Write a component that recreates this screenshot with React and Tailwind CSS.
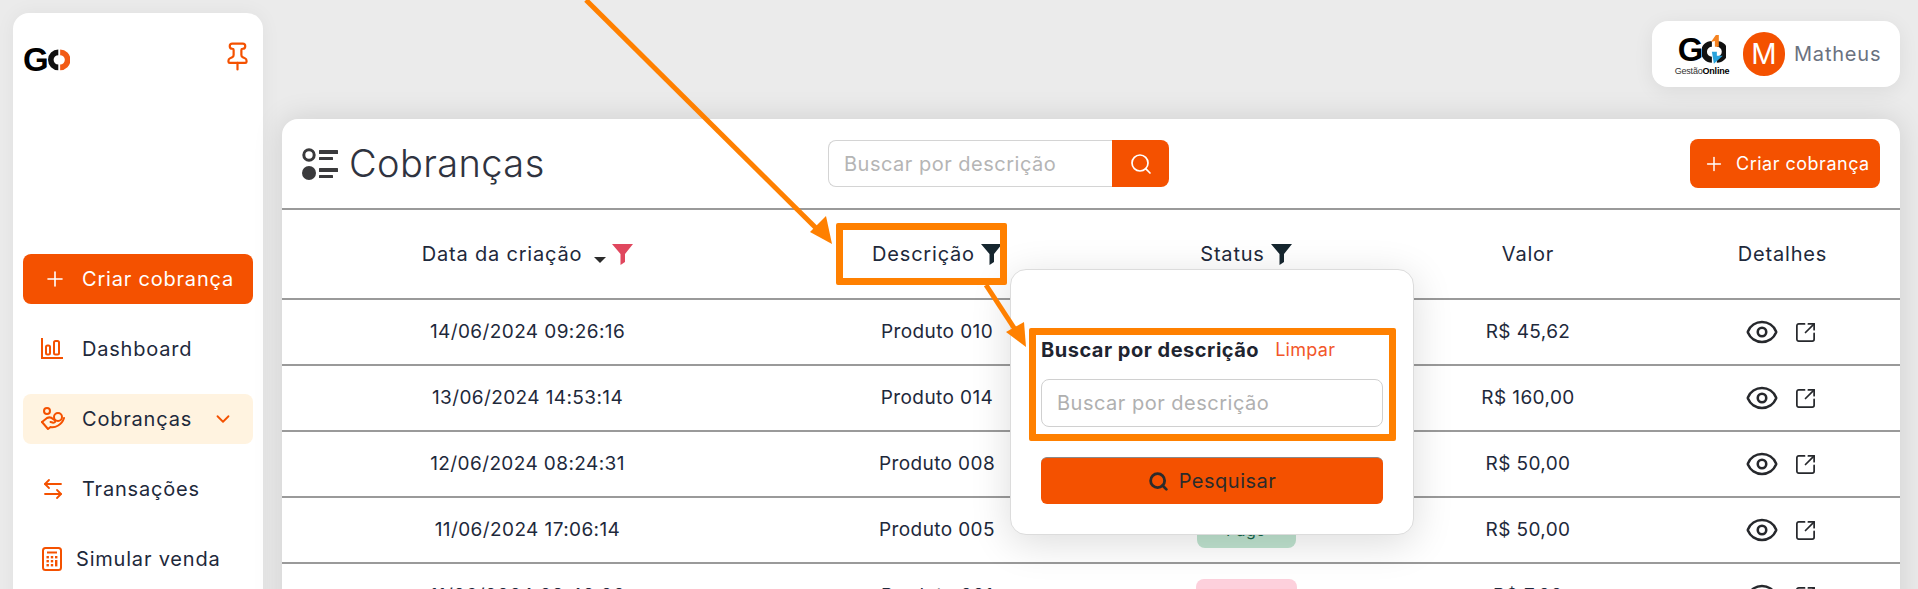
import React from "react";
import { Plus, Pin, ChevronDown, ArrowLeftRight, Search, Eye, SquareArrowOutUpRight } from "lucide-react";

const FONT = "font-['Inter','Liberation_Sans',sans-serif]";

function GoMark({ size = 30, full = false }) {
  return (
    <span className="inline-flex items-center leading-none font-['Liberation_Sans',sans-serif] font-bold text-black" style={{ fontSize: size }}>
      <span className="tracking-[-1px]">G</span>
      {full ? (
        <svg width={size * 0.72} height={size * 0.9} viewBox="0 0 24 30">
          <path d="M10 7A11 11 0 0 0 10 29L10 23A5 5 0 0 1 10 13Z" fill="#111" />
          <path d="M15 7A11 11 0 0 1 15 29L15 23A5 5 0 0 0 15 13Z" fill="#111" />
          <path d="M9 8L14 1H17V13H13V7Z" fill="#f58220" />
          <path d="M10 18H15V22H21L12 30L11 24Z" fill="#29a3dc" />
        </svg>
      ) : (
        <svg width={size * 0.68} height={size * 0.78} viewBox="0 0 24 24">
          <path d="M11 1A11 11 0 0 0 11 23L11 17A5 5 0 0 1 11 7Z" fill="#111" />
          <path d="M13 1A11 11 0 0 1 13 23L13 17A5 5 0 0 0 13 7Z" fill="#f25a14" />
        </svg>
      )}
    </span>
  );
}

function Filter({ color }) {
  return (
    <svg width="21" height="21" viewBox="0 0 21 21" className="shrink-0">
      <path d="M0 0H21L13 10V18L8.5 21V10Z" fill={color} />
    </svg>
  );
}

function BarsIcon() {
  return (
    <svg width="22" height="22" viewBox="0 0 22 22" fill="none" stroke="#f45100" strokeWidth="2">
      <path d="M1 0V20H22" />
      <rect x="5" y="7.5" width="4" height="9" rx="1.5" />
      <rect x="13" y="3" width="5" height="13.5" rx="1.5" />
    </svg>
  );
}

function HandIcon() {
  return (
    <svg width="24" height="24" viewBox="0 0 24 24" fill="none" stroke="#f45100" strokeWidth="2" strokeLinecap="round" strokeLinejoin="round">
      <circle cx="6" cy="4" r="3" />
      <circle cx="17" cy="10" r="4" />
      <path d="M1 15L6 11C8 10 10 10 12 12L14 13.5C15 15 13 16 11.5 15.5L9.5 15" />
      <path d="M1 15L7 22L9.5 20C14 21 21 18 23 11" />
    </svg>
  );
}

function CalcIcon() {
  return (
    <svg width="20" height="24" viewBox="0 0 20 24" fill="none" stroke="#f45100" strokeWidth="2">
      <rect x="1" y="1" width="18" height="22" rx="2.5" />
      <path d="M5 5.5H15" />
      <g fill="#f45100" stroke="none">
        <rect x="4.5" y="9" width="2.4" height="2.4" /><rect x="8.8" y="9" width="2.4" height="2.4" /><rect x="13" y="9" width="2.4" height="2.4" />
        <rect x="4.5" y="13" width="2.4" height="2.4" /><rect x="8.8" y="13" width="2.4" height="2.4" /><rect x="13" y="13" width="2.4" height="6.4" />
        <rect x="4.5" y="17" width="2.4" height="2.4" /><rect x="8.8" y="17" width="2.4" height="2.4" />
      </g>
    </svg>
  );
}

function ListIcon() {
  return (
    <svg width="36" height="32" viewBox="0 0 36 32" fill="#3a3a3c">
      <circle cx="7" cy="7" r="5.2" fill="none" stroke="#3a3a3c" strokeWidth="3" />
      <circle cx="7" cy="25" r="7" />
      <rect x="17" y="2" width="19" height="4" rx="0.5" />
      <rect x="17" y="9" width="14" height="3" rx="0.5" />
      <rect x="17" y="20" width="19" height="4" rx="0.5" />
      <rect x="17" y="27" width="14" height="3" rx="0.5" />
    </svg>
  );
}

function NavItem({ icon, label, active, chevron, gap = "w-[59px] pl-[18px]" }) {
  return (
    <div className={`flex h-[50px] items-center rounded-lg ${active ? "bg-[#fff3e0]" : ""}`}>
      <span className={`flex shrink-0 items-center ${gap}`}>{icon}</span>
      <span className="text-[20px] tracking-[0.8px] text-[#1e293b]">{label}</span>
      {chevron && <ChevronDown className="ml-auto mr-[19px] text-[#f45100]" size={22} strokeWidth={2} />}
    </div>
  );
}

const rows = [
  ["14/06/2024 09:26:16", "Produto 010", "R$ 45,62", null],
  ["13/06/2024 14:53:14", "Produto 014", "R$ 160,00", null],
  ["12/06/2024 08:24:31", "Produto 008", "R$ 50,00", null],
  ["11/06/2024 17:06:14", "Produto 005", "R$ 50,00", "pago"],
  ["11/06/2024 09:42:00", "Produto 001", "R$ 7,00", "pend"],
];

const COLS = "grid grid-cols-[491px_328px_290px_274px_235px]";

export default function App() {
  return (
    <div className={`relative flex h-[589px] w-[1918px] items-start overflow-hidden bg-[#ebebeb] ${FONT}`}>
      {/* Sidebar */}
      <aside className="ml-[13px] mt-[13px] flex h-[620px] w-[250px] shrink-0 flex-col rounded-2xl bg-white px-[10px] shadow-[0_0_20px_rgba(0,0,0,0.05)]">
        <div className="flex h-[47px] items-start justify-between pt-[30px]">
          <GoMark size={33} />
          <Pin size={31} strokeWidth={1.7} className="mt-[-2px] text-[#f45100]" />
        </div>
        <button className="mt-[194px] flex h-[50px] items-center rounded-lg bg-[#f45100] text-[20px] tracking-[0.8px] text-white">
          <Plus size={24} strokeWidth={1.6} className="ml-[20px] mr-[15px]" />
          Criar cobrança
        </button>
        <div className="mt-[20px] flex flex-col gap-[20px]">
          <NavItem icon={<BarsIcon />} label="Dashboard" />
          <NavItem icon={<HandIcon />} label="Cobranças" active chevron />
          <NavItem icon={<ArrowLeftRight size={24} strokeWidth={1.8} className="text-[#f45100]" />} label="Transações" />
          <NavItem icon={<CalcIcon />} label="Simular venda" gap="w-[53px] pl-[19px]" />
        </div>
      </aside>

      {/* Content */}
      <main className="ml-[19px] flex w-[1618px] shrink-0 flex-col">
        <div className="mt-[21px] flex justify-end">
          <div className="flex h-[66px] w-[248px] items-center rounded-2xl bg-white pl-[19px] shadow-[0_4px_20px_rgba(0,0,0,0.07)]">
            <div className="flex w-[62px] flex-col items-center gap-[1px] leading-none">
              <GoMark size={33} full />
              <span className="whitespace-nowrap font-['Liberation_Sans',sans-serif] text-[9px] leading-[9px] tracking-[-0.2px] text-[#333]">
                Gestão<b className="text-black">Online</b>
              </span>
            </div>
            <span className="ml-[10px] flex h-[44px] w-[42px] items-center justify-center rounded-full bg-[#f45100] text-[28px] text-white">M</span>
            <span className="ml-[9px] text-[20px] tracking-[0.8px] text-[#6b7280]">Matheus</span>
          </div>
        </div>

        <section className="mt-[32px] h-[500px] rounded-t-2xl bg-white shadow-[0_0_30px_rgba(0,0,0,0.12)]">
          <header className="flex h-[91px] items-center border-b-2 border-[#9a9a9a] pl-[20px] pr-[20px]">
            <ListIcon />
            <h1 className="ml-[11px] w-[479px] text-[38px] font-light tracking-[0.4px] text-[#2f3340]">Cobranças</h1>
            <div className="flex h-[47px] w-[341px] shrink-0">
              <div className="flex flex-1 items-center rounded-l-lg border border-r-0 border-[#d4d4d4] pl-[15px] text-[20px] tracking-[0.5px] text-[#b5b5b5]">
                Buscar por descrição
              </div>
              <div className="flex w-[57px] items-center justify-center rounded-r-lg bg-[#f45100] text-white">
                <Search size={24} strokeWidth={1.7} />
              </div>
            </div>
            <button className="ml-auto flex h-[49px] w-[190px] items-center rounded-lg bg-[#f45100] text-[18px] tracking-[0.5px] text-white">
              <Plus size={22} strokeWidth={1.6} className="ml-[13px] mr-[11px]" />
              Criar cobrança
            </button>
          </header>

          <div className={`${COLS} h-[90px] items-center border-b-2 border-[#9a9a9a] text-[20px] tracking-[0.8px] text-[#1e293b]`}>
            <div className="flex items-center justify-center">
              Data da criação
              <svg width="12" height="6" viewBox="0 0 12 6" className="ml-[12px] mr-[6px] mt-[11px]"><path d="M0 0H12L6 6Z" fill="#2b2b2b" /></svg>
              <Filter color="#e0475e" />
            </div>
            <div className="flex items-center justify-center gap-[6px]">Descrição <Filter color="#16262f" /></div>
            <div className="flex items-center justify-center gap-[6px]">Status <Filter color="#16262f" /></div>
            <div className="text-center">Valor</div>
            <div className="text-center">Detalhes</div>
          </div>

          {rows.map((r) => (
            <div key={r[1]} className={`${COLS} h-[66px] items-center border-b-2 border-[#9a9a9a] text-[19px] tracking-[0.4px] text-[#1e293b]`}>
              <div className="text-center">{r[0]}</div>
              <div className="text-center">{r[1]}</div>
              <div className="flex justify-center">
                {r[3] === "pago" && <span className="flex h-[35px] w-[99px] items-center justify-center rounded-lg bg-[#bfe3cf] text-[16px] text-[#14634a]">Pago</span>}
                {r[3] === "pend" && <span className="flex h-[35px] w-[101px] items-center justify-center rounded-lg bg-[#fdd0dc] text-[16px] text-[#9f1239]">Vencido</span>}
              </div>
              <div className="text-center">{r[2]}</div>
              <div className="flex items-center justify-center gap-[15px] pr-[4px]">
                <Eye size={34} strokeWidth={1.8} className="text-[#26282c]" />
                <SquareArrowOutUpRight size={23} strokeWidth={1.8} className="text-[#26282c]" />
              </div>
            </div>
          ))}
        </section>
      </main>

      {/* Filter popover */}
      <div className="absolute left-[1010px] top-[269px] h-[266px] w-[404px] rounded-2xl border border-[#dcdcdc] bg-white px-[30px] pt-[66px] shadow-[0_8px_40px_rgba(0,0,0,0.14)]">
        <div className="flex items-center gap-[16px] leading-[28px]">
          <span className="text-[20px] font-bold tracking-[0.5px] text-[#1e2430]">Buscar por descrição</span>
          <span className="text-[18px] tracking-[0.3px] text-[#f2562a]">Limpar</span>
        </div>
        <div className="mt-[15px] flex h-[48px] items-center rounded-lg border border-[#d0d0d0] pl-[15px] text-[20px] tracking-[0.5px] text-[#b0b0b0]">
          Buscar por descrição
        </div>
        <button className="mt-[30px] flex h-[47px] w-full items-center justify-center gap-[10px] rounded-md border-t border-[#8a8a8a] bg-[#f45100] text-[20px] tracking-[0.5px] text-[#2b2b2b]">
          <Search size={21} strokeWidth={3.2} />
          Pesquisar
        </button>
      </div>

      {/* Annotations */}
      <div className="absolute left-[836px] top-[223px] h-[62px] w-[171px] rounded-[2px] border-[7px] border-[#ff8000]" />
      <div className="absolute left-[1029px] top-[328px] h-[113px] w-[367px] rounded-[2px] border-[7px] border-[#ff8000]" />
      <svg className="pointer-events-none absolute left-0 top-0" width="1918" height="589">
        <path d="M586 0L822 234" stroke="#ff8000" strokeWidth="5" fill="none" />
        <path d="M832 244L810 232L826 216Z" fill="#ff8000" />
        <path d="M986 285L1018 334" stroke="#ff8000" strokeWidth="5" fill="none" />
        <path d="M1026 347L1006 332L1024 322Z" fill="#ff8000" />
      </svg>
    </div>
  );
}
